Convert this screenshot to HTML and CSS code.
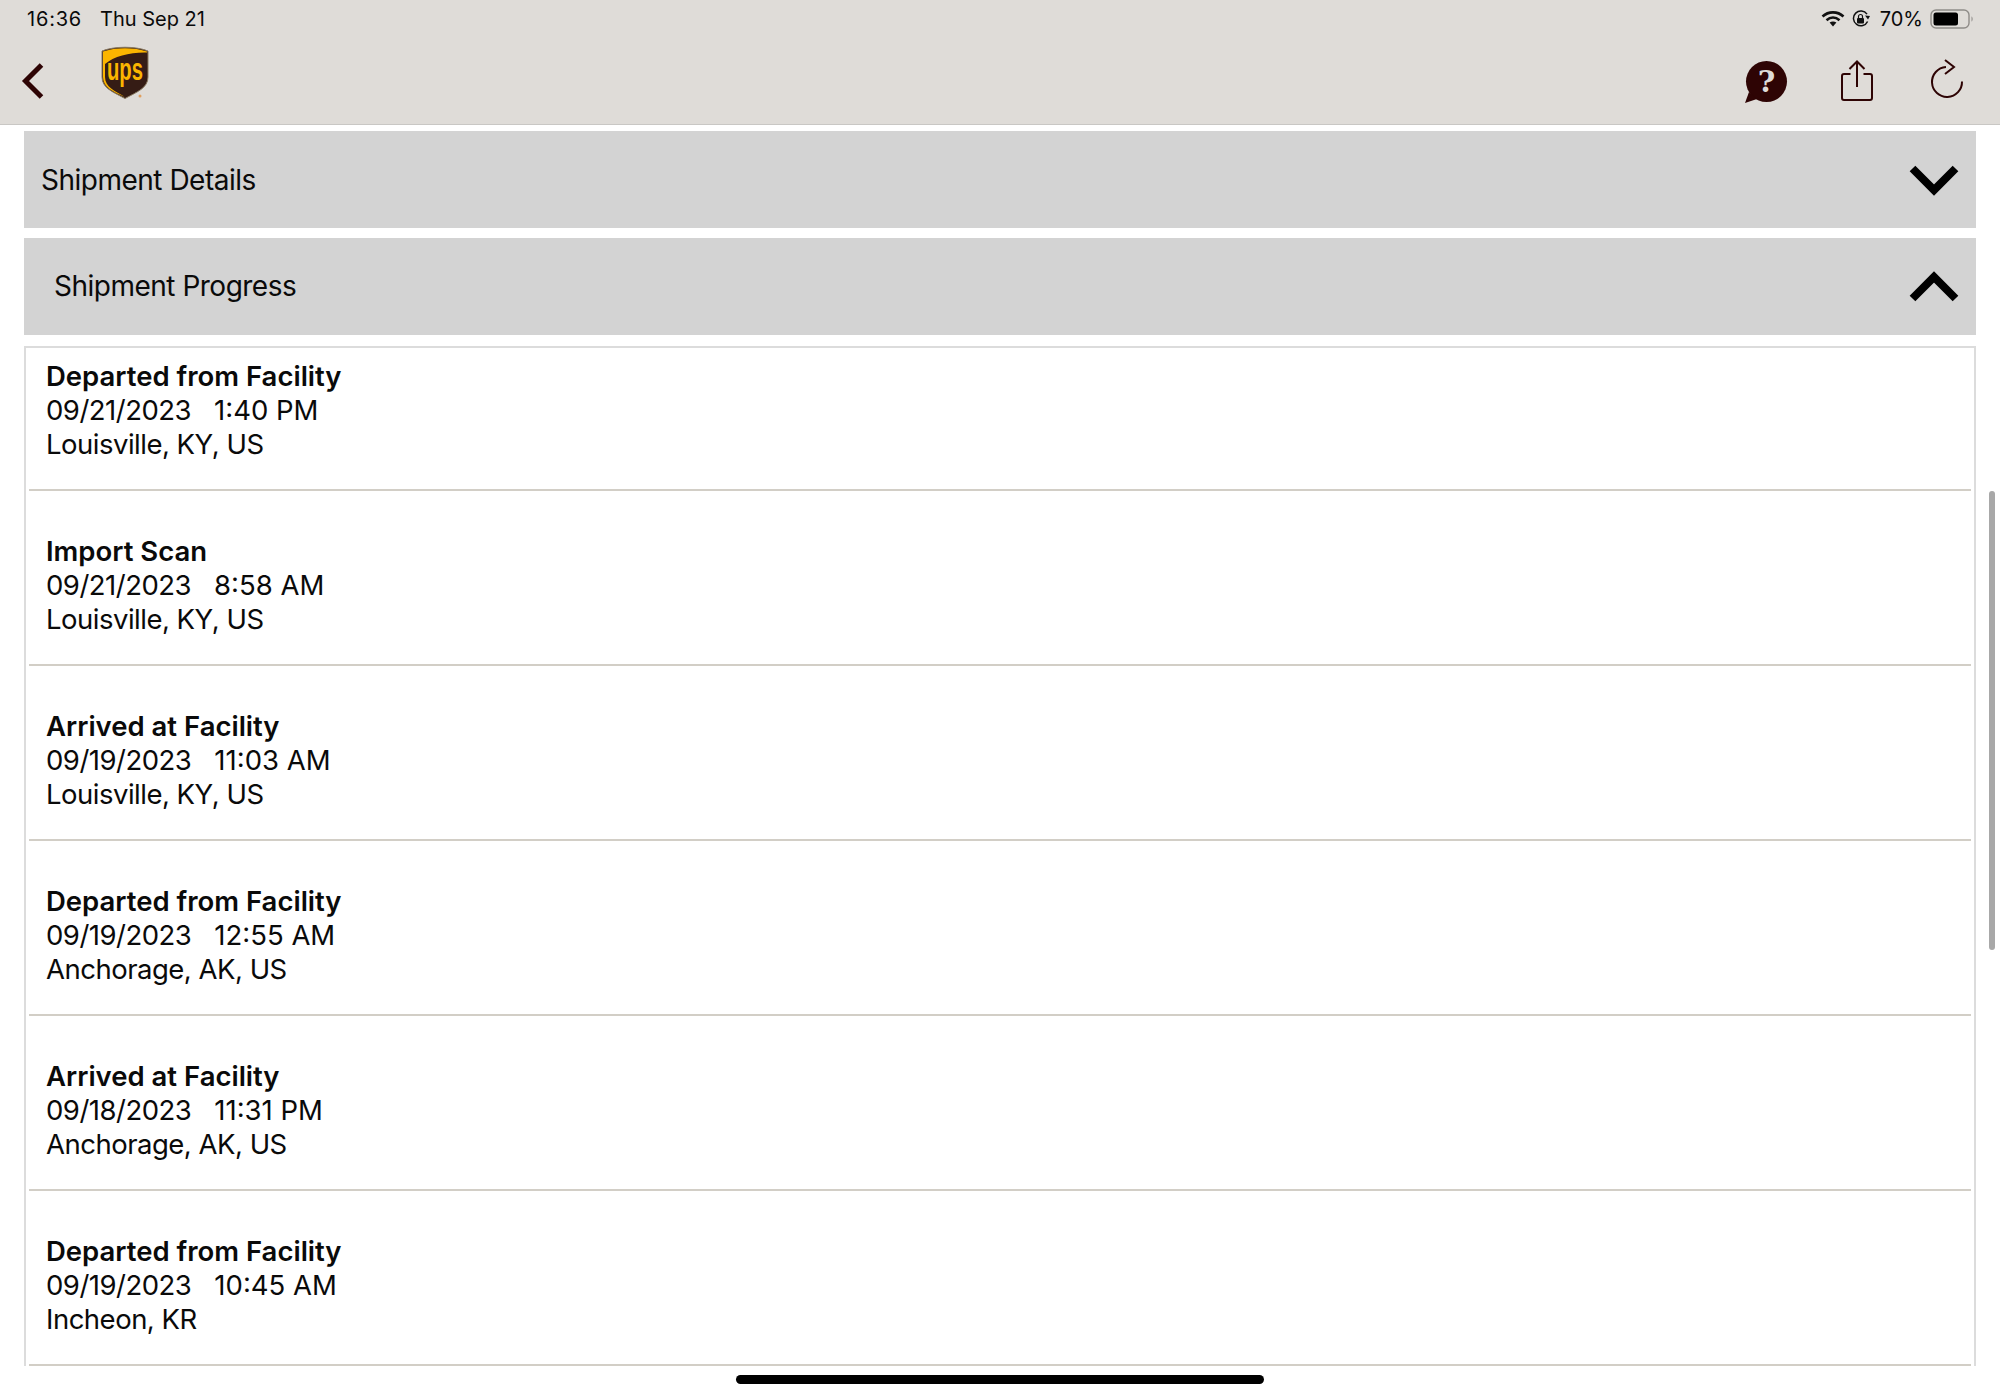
FILE: index.html
```html
<!DOCTYPE html>
<html lang="en">
<head>
    <meta charset="UTF-8">
    <title>Shipment Progress</title>
    <link rel="stylesheet" href="styles.css">
</head>
<body>
    <header class="top">
        <div class="status-bar">
            <span class="status-time">16:36</span>
            <span class="status-date">Thu Sep 21</span>
            <div class="status-right">
                <svg class="ic-wifi" width="24" height="18" viewBox="0 0 24 18">
                    <path d="M1.5 6.5 C7.5 1 16.5 1 22.5 6.5" fill="none" stroke="#111" stroke-width="2.6"/>
                    <path d="M5.5 10.2 C9.5 6.8 14.5 6.8 18.5 10.2" fill="none" stroke="#111" stroke-width="2.6"/>
                    <path d="M8.6 12.6 C10.6 11 13.4 11 15.4 12.6 L12 16.6 Z" fill="#111"/>
                </svg>
                <svg class="ic-lock" width="20" height="18" viewBox="0 0 20 18">
                    <path d="M16 4.2 A7.4 7.4 0 1 0 16.6 11.5" fill="none" stroke="#111" stroke-width="1.5"/>
                    <path d="M14 5.5 L19 6 L17 9.5 Z" fill="#111"/>
                    <rect x="6" y="8" width="7" height="5.5" rx="1" fill="#111"/>
                    <path d="M7.5 8 V6.5 a2 2 0 0 1 4 0 V8" fill="none" stroke="#111" stroke-width="1.2"/>
                </svg>
                <span class="status-pct">70%</span>
                <svg class="ic-battery" width="45" height="20" viewBox="0 0 45 20">
                    <rect x="1" y="1" width="38" height="18" rx="5" fill="none" stroke="#8f8c88" stroke-width="1.4"/>
                    <rect x="3.5" y="3.5" width="24.5" height="13" rx="2.5" fill="#000"/>
                    <path d="M41.5 7.5 C43 8 43 12 41.5 12.5 Z" fill="#8f8c88"/>
                </svg>
            </div>
        </div>
        <nav class="nav-bar">
            <svg class="ic-back" width="24" height="38" viewBox="0 0 24 38">
                <path d="M20.5 3 L4.5 19 L20.5 35" fill="none" stroke="#2e0404" stroke-width="5"/>
            </svg>
            <svg class="ups-logo" width="48" height="56" viewBox="0 0 48 56">
                <path d="M1 7 C13 2 35 2 47 7 V33 C47 44 36 48 24 54.500 C12 48 1 44 1 33 Z" fill="#351c15" stroke="#8a7a60" stroke-width="1"/>
                <path d="M2 7.500 C14 3 34 3 46 7.500 V8.500 C30 8 13 12 4 20 V33 C4 43 14 47 24 53 C12 48 2 43 2 33 Z" fill="#fbb500"/>
                <text class="ups-text" x="24" y="36" text-anchor="middle" textLength="36" lengthAdjust="spacingAndGlyphs">ups</text>
                <circle cx="39" cy="52" r="1.500" fill="#e0a060"/>
            </svg>
            <div class="nav-actions">
                <svg class="ic-help" width="44" height="44" viewBox="0 0 44 44">
                    <circle cx="22.500" cy="21.500" r="20.500" fill="#2e0404"/>
                    <path d="M1 43 L5 32 L13 39 Z" fill="#2e0404"/>
                    <text class="help-mark" x="22.500" y="32" text-anchor="middle">?</text>
                </svg>
                <svg class="ic-share" width="32" height="42" viewBox="0 0 32 42">
                    <path d="M9.500 14 H3 a2 2 0 0 0 -2 2 V38 a2 2 0 0 0 2 2 H29 a2 2 0 0 0 2 -2 V16 a2 2 0 0 0 -2 -2 H22.500" fill="none" stroke="#2e0404" stroke-width="2"/>
                    <path d="M16 27 V2 M8.500 9 L16 1.500 L23.500 9" fill="none" stroke="#2e0404" stroke-width="2"/>
                </svg>
                <svg class="ic-refresh" width="34" height="40" viewBox="0 0 34 40">
                    <path d="M16 8 A15 15 0 1 0 32 22.500" fill="none" stroke="#2e0404" stroke-width="2"/>
                    <path d="M15 1 L24 8 L15 15" fill="none" stroke="#2e0404" stroke-width="2"/>
                </svg>
            </div>
        </nav>
    </header>

    <main class="content">
        <div class="panel">
            <span class="panel-title">Shipment Details</span>
            <svg class="chevron" width="50" height="32" viewBox="0 0 50 32">
                <path d="M3.500 4.500 L25 26 L46.500 4.500" fill="none" stroke="#000" stroke-width="8"/>
            </svg>
        </div>
        <div class="panel panel-open">
            <span class="panel-title">Shipment Progress</span>
            <svg class="chevron" width="50" height="32" viewBox="0 0 50 32">
                <path d="M3.500 27.500 L25 6 L46.500 27.500" fill="none" stroke="#000" stroke-width="8"/>
            </svg>
        </div>

        <div class="progress-list">
            <div class="progress-row">
                <div class="row-title">Departed from Facility</div>
                <div class="row-date"><span>09/21/2023</span><span>1:40 PM</span></div>
                <div>Louisville, KY, US</div>
            </div>
            <div class="progress-row">
                <div class="row-title">Import Scan</div>
                <div class="row-date"><span>09/21/2023</span><span>8:58 AM</span></div>
                <div>Louisville, KY, US</div>
            </div>
            <div class="progress-row">
                <div class="row-title">Arrived at Facility</div>
                <div class="row-date"><span>09/19/2023</span><span>11:03 AM</span></div>
                <div>Louisville, KY, US</div>
            </div>
            <div class="progress-row">
                <div class="row-title">Departed from Facility</div>
                <div class="row-date"><span>09/19/2023</span><span>12:55 AM</span></div>
                <div>Anchorage, AK, US</div>
            </div>
            <div class="progress-row">
                <div class="row-title">Arrived at Facility</div>
                <div class="row-date"><span>09/18/2023</span><span>11:31 PM</span></div>
                <div>Anchorage, AK, US</div>
            </div>
            <div class="progress-row">
                <div class="row-title">Departed from Facility</div>
                <div class="row-date"><span>09/19/2023</span><span>10:45 AM</span></div>
                <div>Incheon, KR</div>
            </div>
        </div>
    </main>

    <div class="scroll-thumb"></div>
    <div class="home-bar"></div>
</body>
</html>
```

FILE: styles.css
```css
html, body {
    height: 100%;
}

body {
    margin: 0;
    height: 1397px;
    overflow: hidden;
    position: relative;
    background-color: #ffffff;
    color: #0a0a0a;
    font-family: Inter, "Liberation Sans", sans-serif;
}

/* Top bar */
.top {
    height: 124px;
    background-color: #dfdcd8;
    border-bottom: 1px solid #c9c7c4;
}

.status-bar {
    height: 38px;
    display: flex;
    align-items: center;
    padding: 0 25px 0 27px;
    font-size: 20px;
}

.status-time {
    letter-spacing: 0.8px;
}

.status-date {
    margin-left: 18px;
}

.status-right {
    margin-left: auto;
    display: flex;
    align-items: center;
}

.ic-lock {
    margin-left: 6px;
}

.status-pct {
    margin-left: 9px;
}

.ic-battery {
    margin-left: 7px;
}

.nav-bar {
    height: 86px;
    display: flex;
    align-items: flex-start;
    padding: 0 36px 0 21px;
}

.ic-back {
    margin-top: 24px;
}

.ups-logo {
    margin: 6px 0 0 56px;
    overflow: visible;
}

.ups-text {
    font-family: "Liberation Sans", sans-serif;
    font-size: 32px;
    font-weight: 700;
    fill: #fbb500;
}

.help-mark {
    font-family: "DejaVu Serif", serif;
    font-size: 30px;
    font-weight: 700;
    fill: #dfdcd8;
}

.nav-actions {
    margin-left: auto;
    display: flex;
    align-items: flex-start;
}

.ic-help {
    margin-top: 22px;
}

.ic-share {
    margin: 22px 0 0 53px;
}

.ic-refresh {
    margin: 21px 0 0 57px;
}

/* Collapsible panels */
.content {
    padding: 6px 24px 0;
}

.panel {
    height: 97px;
    margin-bottom: 10px;
    padding: 0 17px;
    display: flex;
    align-items: center;
    justify-content: space-between;
    background-color: #d3d3d3;
    font-size: 28px;
    letter-spacing: -0.5px;
}

.panel-open {
    margin-bottom: 11px;
    padding-left: 30px;
}

.panel-title {
    position: relative;
    top: 0;
}

.panel-open .panel-title {
    top: -1px;
}

/* Progress list */
.progress-list {
    border: 2px solid #dcdcdc;
    border-bottom: none;
    padding: 0 3px;
    font-size: 27.5px;
    line-height: 34px;
    letter-spacing: -0.5px;
}

.progress-row {
    padding: 43px 0 28px 17px;
    border-bottom: 2px solid #d2cec6;
}

.progress-row:first-child {
    padding-top: 11px;
}

.row-title {
    font-weight: 600;
    letter-spacing: 0;
}

.row-date span + span {
    margin-left: 23px;
    letter-spacing: 0;
}

/* Overlays */
.scroll-thumb {
    position: absolute;
    left: 1989px;
    top: 491px;
    width: 6px;
    height: 459px;
    border-radius: 3px;
    background-color: #a8a8a8;
}

.home-bar {
    position: absolute;
    left: 736px;
    top: 1375px;
    width: 528px;
    height: 9px;
    border-radius: 5px;
    background-color: #000000;
}
```
